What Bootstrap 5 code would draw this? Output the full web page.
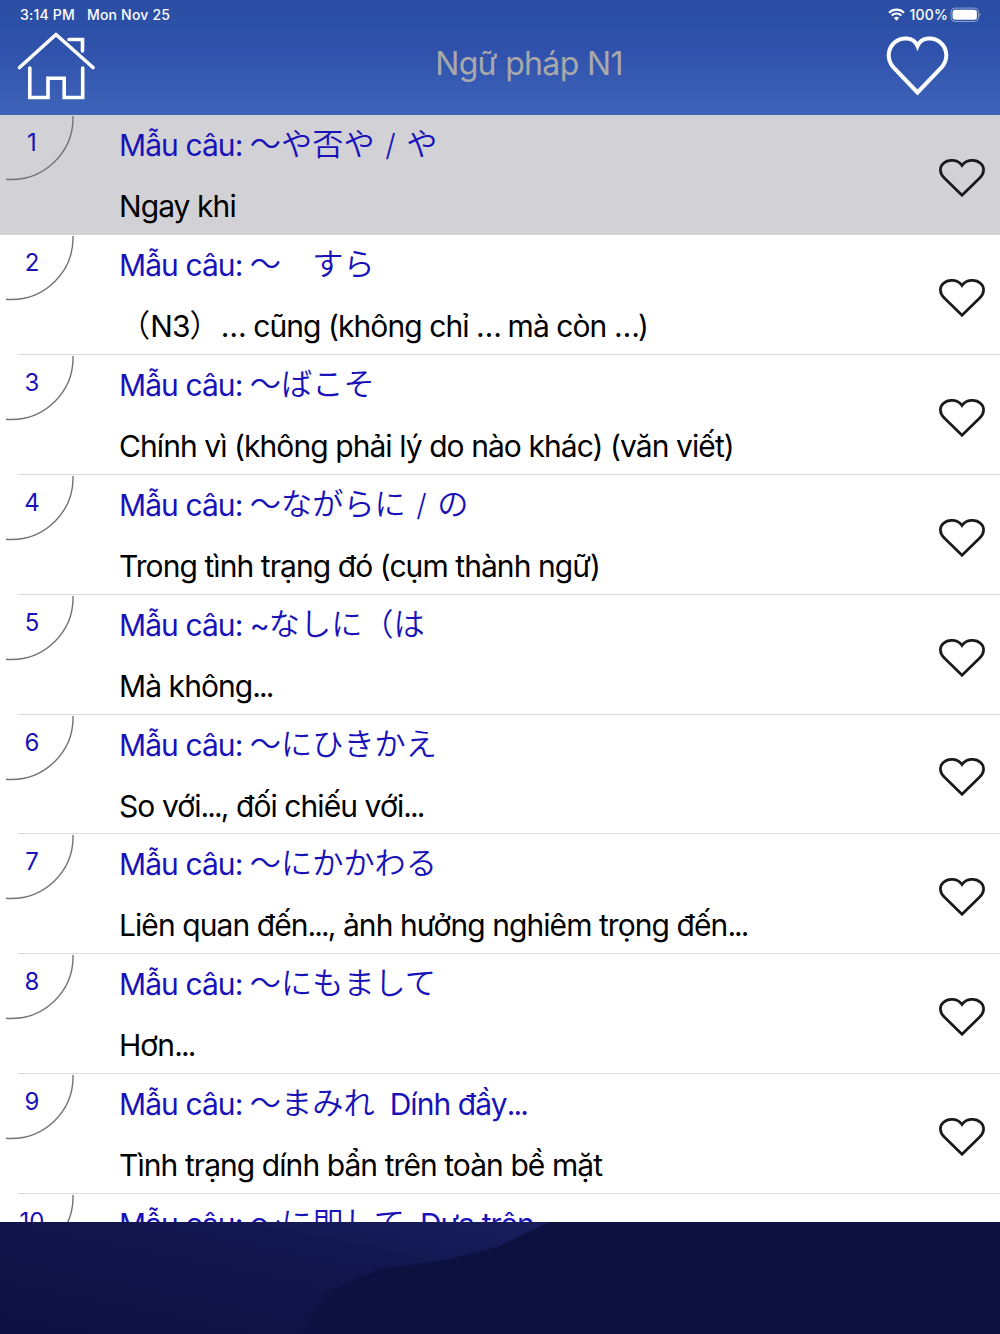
<!DOCTYPE html>
<html lang="vi">
<head>
    <meta charset="UTF-8">
    <meta name="viewport" content="width=device-width, initial-scale=1.0">
    <title>Ngữ pháp N1</title>
    <link href="https://cdn.jsdelivr.net/npm/bootstrap@5.3.0/dist/css/bootstrap.min.css" rel="stylesheet">
    <style>
        body {
            font-family: Inter, "Noto Sans CJK JP", sans-serif;
            height: 1334px;
            overflow: hidden;
            background: #fff;
        }
        .app-header {
            height: 115px;
            background: linear-gradient(#2a4ea3, #3052ac 45%, #3e65b9);
        }
        .status-bar {
            height: 29px;
            padding: 0 19px 0 20px;
            font-size: 14px;
            font-weight: 500;
            letter-spacing: .2px;
        }
        .title-bar {
            height: 85px;
            padding: 3px 50px 0 17px;
        }
        .page-title {
            margin-left: 76px;
            font-size: 32px;
            line-height: 63px;
            color: #a9a9ab;
            letter-spacing: -.65px;
        }
        .grammar-list {
            height: 1106.5px;
            overflow: hidden;
        }
        .grammar-item {
            height: 119.91px;
            color: #000;
        }
        .grammar-item::after {
            content: "";
            position: absolute;
            left: 18px;
            right: 0;
            bottom: 0;
            border-bottom: 1px solid #dcdcde;
        }
        .grammar-item.selected { background: #d1d1d6; }
        .grammar-item.selected::after { border-color: #d1d1d6; }
        .number-cell {
            width: 120px;
            height: 100%;
        }
        .number-cell span {
            width: 64px;
            padding-top: 10px;
            font-size: 24px;
            line-height: 36px;
            color: #1812b8;
        }
        .corner-arc {
            position: absolute;
            left: 0;
            top: -1px;
        }
        .item-text {
            margin-left: -1px;
            font-size: 30px;
            letter-spacing: -.93px;
        }
        .pattern, .meaning {
            height: 61px;
            line-height: 61px;
            white-space: pre;
        }
        .pattern {
            color: #1812b8;
        }
        .jp {
            font-family: "Noto Sans CJK JP", sans-serif;
            font-size: 31.2px;
            font-weight: 350;
            line-height: 1;
            letter-spacing: 0;
            vertical-align: 1px;
        }
        .slash {
            font-weight: 350;
            padding: 0 4px 0 3px;
        }
        .dots { letter-spacing: -1.9px; }
        .heart-btn {
            padding: 6px 15px 0 0;
            color: #1a1a1b;
        }
        .app-footer { height: 112.5px; background: #0d1140; }
    </style>
</head>
<body>
    <svg class="d-none">
        <symbol id="heart" viewBox="0 0 46 38">
            <path d="M23 36.3 5.3 19C0.2 14 .4 7.8 4.3 4.4 9.3-.1 18.8.3 23 6.5 27.2.3 36.7-.1 41.7 4.4 45.6 7.8 45.8 14 40.7 19Z" fill="none" stroke="currentColor" stroke-width="2.7"/>
        </symbol>
        <symbol id="arc" viewBox="0 0 76 67">
            <path d="M73 2C74 38 44 68 6 65.3" fill="none" stroke="#737377" stroke-width="1.4"/>
        </symbol>
    </svg>

    <header class="app-header text-white">
        <div class="status-bar d-flex justify-content-between align-items-center">
            <div class="d-flex gap-2"><span class="me-1">3:14 PM</span><span>Mon Nov 25</span></div>
            <div class="d-flex align-items-center">
                <svg width="17" height="13" viewBox="0 0 17 13" fill="none" stroke="#fff" stroke-width="2.1">
                    <path d="M1 4.7a10.7 10.7 0 0 1 15 0M3.7 7.5a6.9 6.9 0 0 1 9.6 0"/>
                    <path d="M8.5 12.7 5.9 10a3.8 3.8 0 0 1 5.2 0Z" fill="#fff" stroke="none"/>
                </svg>
                <span class="ms-1">100%</span>
                <svg width="33" height="16" viewBox="-2 0 33 16">
                    <rect x="1" y="1.1" width="27.5" height="13.4" rx="4" fill="none" stroke="#8ea2d1"/>
                    <rect x="2.6" y="2.8" width="24.3" height="10" rx="2.5" fill="#fff"/>
                    <path d="M29.5 5.7q2 2 0 4.2Z" fill="#8ea2d1"/>
                </svg>
            </div>
        </div>
        <div class="title-bar d-flex justify-content-between align-items-start">
            <svg width="79" height="70" viewBox="0 0 79 70" fill="none" stroke="#fff" stroke-width="3.6">
                <path d="M2.5 35.5 39 2.5 76 35.5" stroke-linecap="round" stroke-linejoin="round"/>
                <path d="M52 7.5H65.5V19M12.8 36V65.5H31V46.2H47.2V65.5H65.7V36" stroke-linecap="round"/>
            </svg>
            <div class="page-title">Ngữ pháp N1</div>
            <svg width="64" height="62" viewBox="0 0 64 62" class="mt-1">
                <path d="M31.5 56.500 7.500 31.500C1 24 1 14 8 7 15 .5 27.500 .5 31.500 10 35.500 .5 48 .5 55 7 62 14 62 24 55.500 31.500Z" fill="none" stroke="#fff" stroke-width="4"/>
            </svg>
        </div>
    </header>

    <main class="grammar-list">
        <div class="grammar-item selected position-relative d-flex">
            <div class="number-cell"><svg class="corner-arc" width="76" height="67"><use href="#arc"/></svg><span class="d-block text-center">1</span></div>
            <div class="item-text flex-grow-1">
                <div class="pattern">Mẫu câu: <span class="jp">～や否や</span> <span class="slash">/</span> <span class="jp">や</span></div>
                <div class="meaning">Ngay khi</div>
            </div>
            <div class="heart-btn d-flex align-items-center"><svg width="46" height="38"><use href="#heart"/></svg></div>
        </div>
        <div class="grammar-item position-relative d-flex">
            <div class="number-cell"><svg class="corner-arc" width="76" height="67"><use href="#arc"/></svg><span class="d-block text-center">2</span></div>
            <div class="item-text flex-grow-1">
                <div class="pattern">Mẫu câu: <span class="jp">～　すら</span></div>
                <div class="meaning"><span class="jp">（</span>N3<span class="jp">）</span>… cũng (không chỉ <span class="dots">…</span> mà còn <span class="dots">…</span>)</div>
            </div>
            <div class="heart-btn d-flex align-items-center"><svg width="46" height="38"><use href="#heart"/></svg></div>
        </div>
        <div class="grammar-item position-relative d-flex">
            <div class="number-cell"><svg class="corner-arc" width="76" height="67"><use href="#arc"/></svg><span class="d-block text-center">3</span></div>
            <div class="item-text flex-grow-1">
                <div class="pattern">Mẫu câu: <span class="jp">～ばこそ</span></div>
                <div class="meaning">Chính vì (không phải lý do nào khác) (văn viết)</div>
            </div>
            <div class="heart-btn d-flex align-items-center"><svg width="46" height="38"><use href="#heart"/></svg></div>
        </div>
        <div class="grammar-item position-relative d-flex">
            <div class="number-cell"><svg class="corner-arc" width="76" height="67"><use href="#arc"/></svg><span class="d-block text-center">4</span></div>
            <div class="item-text flex-grow-1">
                <div class="pattern">Mẫu câu: <span class="jp">～ながらに</span> <span class="slash">/</span> <span class="jp">の</span></div>
                <div class="meaning">Trong tình trạng đó (cụm thành ngữ)</div>
            </div>
            <div class="heart-btn d-flex align-items-center"><svg width="46" height="38"><use href="#heart"/></svg></div>
        </div>
        <div class="grammar-item position-relative d-flex">
            <div class="number-cell"><svg class="corner-arc" width="76" height="67"><use href="#arc"/></svg><span class="d-block text-center">5</span></div>
            <div class="item-text flex-grow-1">
                <div class="pattern">Mẫu câu: ~<span class="jp">なしに（は</span></div>
                <div class="meaning">Mà không<span class="dots">...</span></div>
            </div>
            <div class="heart-btn d-flex align-items-center"><svg width="46" height="38"><use href="#heart"/></svg></div>
        </div>
        <div class="grammar-item position-relative d-flex">
            <div class="number-cell"><svg class="corner-arc" width="76" height="67"><use href="#arc"/></svg><span class="d-block text-center">6</span></div>
            <div class="item-text flex-grow-1">
                <div class="pattern">Mẫu câu: <span class="jp">～にひきかえ</span></div>
                <div class="meaning">So với<span class="dots">...</span>, đối chiếu với<span class="dots">...</span></div>
            </div>
            <div class="heart-btn d-flex align-items-center"><svg width="46" height="38"><use href="#heart"/></svg></div>
        </div>
        <div class="grammar-item position-relative d-flex">
            <div class="number-cell"><svg class="corner-arc" width="76" height="67"><use href="#arc"/></svg><span class="d-block text-center">7</span></div>
            <div class="item-text flex-grow-1">
                <div class="pattern">Mẫu câu: <span class="jp">～にかかわる</span></div>
                <div class="meaning">Liên quan đến<span class="dots">...</span>, ảnh hưởng nghiêm trọng đến<span class="dots">...</span></div>
            </div>
            <div class="heart-btn d-flex align-items-center"><svg width="46" height="38"><use href="#heart"/></svg></div>
        </div>
        <div class="grammar-item position-relative d-flex">
            <div class="number-cell"><svg class="corner-arc" width="76" height="67"><use href="#arc"/></svg><span class="d-block text-center">8</span></div>
            <div class="item-text flex-grow-1">
                <div class="pattern">Mẫu câu: <span class="jp">～にもまして</span></div>
                <div class="meaning">Hơn<span class="dots">...</span></div>
            </div>
            <div class="heart-btn d-flex align-items-center"><svg width="46" height="38"><use href="#heart"/></svg></div>
        </div>
        <div class="grammar-item position-relative d-flex">
            <div class="number-cell"><svg class="corner-arc" width="76" height="67"><use href="#arc"/></svg><span class="d-block text-center">9</span></div>
            <div class="item-text flex-grow-1">
                <div class="pattern">Mẫu câu: <span class="jp">～まみれ</span>  Dính đầy<span class="dots">...</span></div>
                <div class="meaning">Tình trạng dính bẩn trên toàn bề mặt</div>
            </div>
            <div class="heart-btn d-flex align-items-center"><svg width="46" height="38"><use href="#heart"/></svg></div>
        </div>
        <div class="grammar-item position-relative d-flex">
            <div class="number-cell"><svg class="corner-arc" width="76" height="67"><use href="#arc"/></svg><span class="d-block text-center">10</span></div>
            <div class="item-text flex-grow-1">
                <div class="pattern">Mẫu câu: <span class="jp">～に即して</span>  Dựa trên</div>
            </div>
        </div>
    </main>

    <footer class="app-footer">
        <svg class="d-block" width="1000" height="113" viewBox="0 0 1000 113">
            <defs>
                <linearGradient id="ridge" x1="0" y1="1" x2="1" y2="0">
                    <stop offset="0" stop-color="#0e1142"/>
                    <stop offset=".5" stop-color="#111449"/>
                    <stop offset=".85" stop-color="#161b58"/>
                    <stop offset="1" stop-color="#181e5c"/>
                </linearGradient>
            </defs>
            <path d="M0 0H549L497 25 446 38 381 46 330 68 Q312 90 302 113H0Z" fill="url(#ridge)"/>
        </svg>
    </footer>

    <script src="https://cdn.jsdelivr.net/npm/bootstrap@5.3.0/dist/js/bootstrap.bundle.min.js"></script>
</body>
</html>
